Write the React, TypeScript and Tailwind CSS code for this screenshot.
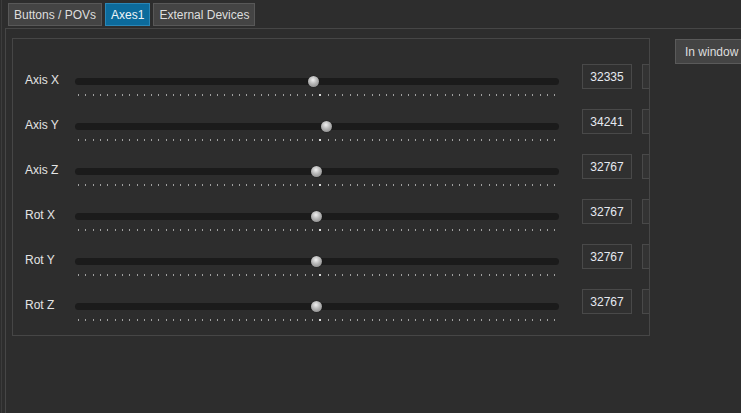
const axes = [
  { label: 'Axis X', value: 32335 },
  { label: 'Axis Y', value: 34241 },
  { label: 'Axis Z', value: 32767 },
  { label: 'Rot X', value: 32767 },
  { label: 'Rot Y', value: 32767 },
  { label: 'Rot Z', value: 32767 },
];

const tabs = ['Buttons / POVs', 'Axes1', 'External Devices'];

// 66 ticks, one every 1000 units
const ticks = Array.from({ length: 66 }, (_, i) => i);

function AxisRow({ label, value }: { label: string; value: number }) {
  const pct = value / 65535;
  return (
    <div className="flex items-start h-[45px]">
      <div className="w-[50px] shrink-0 mt-[16px] text-[12px] leading-[14px] text-[#e4e4e4]">{label}</div>

      {/* Slider */}
      <div className="w-[484px] shrink-0 mt-[21px]">
        <div className="relative h-[7px] rounded-full bg-[#1b1b1b]">
          <div
            className="absolute top-[-2px] w-[11px] h-[11px] rounded-full bg-[radial-gradient(circle_at_45%_35%,#f0f0f0,#b4b4b4_45%,#7c7c7c)] shadow-[0_0_1px_#000]"
            style={{ left: `${3 + pct * 466}px` }}
          />
        </div>
        <div className="flex justify-between px-[3px] mt-[9px]">
          {ticks.map((t) => (
            <span
              key={t}
              className={t === 33 ? 'w-[2px] h-[2px] bg-[#dcdcdc]' : 'w-px h-[2px] bg-[#a0a0a0]'}
            />
          ))}
        </div>
      </div>

      {/* Value boxes */}
      <div className="ml-[23px] mt-[7px] w-[50px] h-[25px] shrink-0 border border-[#494949] bg-[#303030] flex items-center justify-center text-[12px] text-[#e6eaf0]">
        {value}
      </div>
      <div className="ml-[10px] mt-[7px] w-[50px] h-[25px] shrink-0 border border-[#494949] bg-[#333333]" />
    </div>
  );
}

export default function App() {
  return (
    <div className="w-[741px] h-[413px] bg-[#2d2d2d] overflow-hidden flex flex-col font-['Liberation_Sans',Arial,sans-serif]">
      {/* Tab bar */}
      <div className="flex gap-[3px] pl-[6px] pt-[3px] h-[28px] border-l border-[#3c3c3c] ml-px">
        {tabs.map((t) => (
          <div
            key={t}
            className={
              t === 'Axes1'
                ? 'h-[23px] px-[5px] flex items-center text-[12px] text-[#eef4f8] bg-[#0c6b9c] border border-[#2a86b6]'
                : 'h-[23px] px-[5px] flex items-center text-[12px] text-[#dedede] bg-[#444444] border border-[#585858]'
            }
          >
            {t}
          </div>
        ))}
      </div>

      {/* Pane */}
      <div className="flex-1 flex border-l border-[#3c3c3c] ml-px">
        <div className="flex-1 ml-[3px] border-l border-t border-[#464646] pl-[6px] pt-[9px] flex items-start">
          {/* Group box */}
          <div className="w-[638px] h-[298px] shrink-0 border border-[#464646] overflow-hidden pl-[12px] pt-[18px]">
            {axes.map((a) => (
              <AxisRow key={a.label} {...a} />
            ))}
          </div>

          <div className="ml-[25px] mt-[1px] h-[25px] px-[9px] flex items-center whitespace-nowrap text-[12px] text-[#dedede] bg-[#444444] border border-[#5a5a5a]">
            In window
          </div>
        </div>
      </div>
    </div>
  );
}
